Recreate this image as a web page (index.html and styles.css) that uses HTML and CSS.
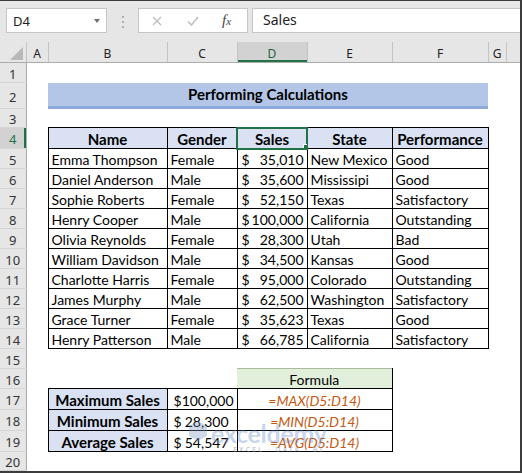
FILE: index.html
```html
<!DOCTYPE html>
<html lang="en">

<head>
    <meta charset="UTF-8">
    <meta name="viewport" content="width=device-width, initial-scale=1.0">
    <title>Performing Calculations</title>
    <link rel="stylesheet" href="styles.css">
</head>

<body>
    <div class="window">
        <div class="formula-bar">
            <div class="name-box">D4<span class="arrow"></span></div>
            <div class="grip"><i></i><i></i><i></i></div>
            <div class="fx-box">
                <svg width="10" height="10" viewBox="0 0 10 10"><path d="M1 1L9 9M9 1L1 9" stroke="#bdbdbd" stroke-width="1.3" fill="none"/></svg>
                <svg width="12" height="10" viewBox="0 0 12 10"><path d="M1 5.5L4.5 9L11 1" stroke="#bdbdbd" stroke-width="1.5" fill="none"/></svg>
                <span class="fx">f<span>x</span></span>
            </div>
            <div class="formula-input">Sales</div>
        </div>

        <table class="sheet">
            <colgroup>
                <col style="width:26px">
                <col style="width:22px">
                <col style="width:119px">
                <col style="width:70px">
                <col style="width:70px">
                <col style="width:85px">
                <col style="width:96px">
                <col style="width:18px">
                <col style="width:14px">
            </colgroup>
            <tr class="col-head">
                <th class="corner"><svg width="13" height="13" viewBox="0 0 13 13"><polygon points="13,0 13,13 0,13" fill="#b8b8b8"/></svg></th>
                <th>A</th>
                <th>B</th>
                <th>C</th>
                <th class="sel">D</th>
                <th>E</th>
                <th>F</th>
                <th>G</th>
                <th class="rest"></th>
            </tr>
            <tr>
                <th class="rh">1</th>
                <td colspan="8"></td>
            </tr>
            <tr class="tall">
                <th class="rh">2</th>
                <td></td>
                <td colspan="5" class="title">Performing Calculations</td>
                <td colspan="2"></td>
            </tr>
            <tr class="short">
                <th class="rh">3</th>
                <td colspan="8"></td>
            </tr>
            <tr class="mid">
                <th class="rh sel">4</th>
                <td></td>
                <td class="b hd">Name</td>
                <td class="b hd">Gender</td>
                <td class="b hd active">Sales</td>
                <td class="b hd">State</td>
                <td class="b hd">Performance</td>
                <td colspan="2"></td>
            </tr>
            <tr>
                <th class="rh">5</th>
                <td></td>
                <td class="b">Emma Thompson</td>
                <td class="b">Female</td>
                <td class="b num"><span class="cur">$</span>35,010</td>
                <td class="b">New Mexico</td>
                <td class="b">Good</td>
                <td colspan="2"></td>
            </tr>
            <tr>
                <th class="rh">6</th>
                <td></td>
                <td class="b">Daniel Anderson</td>
                <td class="b">Male</td>
                <td class="b num"><span class="cur">$</span>35,600</td>
                <td class="b">Mississipi</td>
                <td class="b">Good</td>
                <td colspan="2"></td>
            </tr>
            <tr>
                <th class="rh">7</th>
                <td></td>
                <td class="b">Sophie Roberts</td>
                <td class="b">Female</td>
                <td class="b num"><span class="cur">$</span>52,150</td>
                <td class="b">Texas</td>
                <td class="b">Satisfactory</td>
                <td colspan="2"></td>
            </tr>
            <tr>
                <th class="rh">8</th>
                <td></td>
                <td class="b">Henry Cooper</td>
                <td class="b">Male</td>
                <td class="b num"><span class="cur">$</span>100,000</td>
                <td class="b">California</td>
                <td class="b">Outstanding</td>
                <td colspan="2"></td>
            </tr>
            <tr>
                <th class="rh">9</th>
                <td></td>
                <td class="b">Olivia Reynolds</td>
                <td class="b">Female</td>
                <td class="b num"><span class="cur">$</span>28,300</td>
                <td class="b">Utah</td>
                <td class="b">Bad</td>
                <td colspan="2"></td>
            </tr>
            <tr>
                <th class="rh">10</th>
                <td></td>
                <td class="b">William Davidson</td>
                <td class="b">Male</td>
                <td class="b num"><span class="cur">$</span>34,500</td>
                <td class="b">Kansas</td>
                <td class="b">Good</td>
                <td colspan="2"></td>
            </tr>
            <tr>
                <th class="rh">11</th>
                <td></td>
                <td class="b">Charlotte Harris</td>
                <td class="b">Female</td>
                <td class="b num"><span class="cur">$</span>95,000</td>
                <td class="b">Colorado</td>
                <td class="b">Outstanding</td>
                <td colspan="2"></td>
            </tr>
            <tr>
                <th class="rh">12</th>
                <td></td>
                <td class="b">James Murphy</td>
                <td class="b">Male</td>
                <td class="b num"><span class="cur">$</span>62,500</td>
                <td class="b">Washington</td>
                <td class="b">Satisfactory</td>
                <td colspan="2"></td>
            </tr>
            <tr>
                <th class="rh">13</th>
                <td></td>
                <td class="b">Grace Turner</td>
                <td class="b">Female</td>
                <td class="b num"><span class="cur">$</span>35,623</td>
                <td class="b">Texas</td>
                <td class="b">Good</td>
                <td colspan="2"></td>
            </tr>
            <tr>
                <th class="rh">14</th>
                <td></td>
                <td class="b">Henry Patterson</td>
                <td class="b">Male</td>
                <td class="b num"><span class="cur">$</span>66,785</td>
                <td class="b">California</td>
                <td class="b">Satisfactory</td>
                <td colspan="2"></td>
            </tr>
            <tr>
                <th class="rh">15</th>
                <td colspan="8"></td>
            </tr>
            <tr>
                <th class="rh">16</th>
                <td colspan="3"></td>
                <td colspan="2" class="fhead">Formula</td>
                <td colspan="3"></td>
            </tr>
            <tr class="mid">
                <th class="rh">17</th>
                <td></td>
                <td class="b hd">Maximum Sales</td>
                <td class="b num wide"><span class="cur">$</span>100,000</td>
                <td colspan="2" class="b fml">=MAX(D5:D14)</td>
                <td colspan="3"></td>
            </tr>
            <tr class="mid">
                <th class="rh">18</th>
                <td></td>
                <td class="b hd">Minimum Sales</td>
                <td class="b num wide"><span class="cur">$</span>28,300</td>
                <td colspan="2" class="b fml">=MIN(D5:D14)</td>
                <td colspan="3"></td>
            </tr>
            <tr class="mid">
                <th class="rh">19</th>
                <td></td>
                <td class="b hd">Average Sales</td>
                <td class="b num wide"><span class="cur">$</span>54,547</td>
                <td colspan="2" class="b fml">=AVG(D5:D14)</td>
                <td colspan="3"></td>
            </tr>
            <tr class="short">
                <th class="rh">20</th>
                <td colspan="8"></td>
            </tr>
        </table>

        <!-- faint site watermark over the lower table -->
        <div class="watermark">
            <svg width="20" height="20" viewBox="0 0 20 20"><polygon points="10,0 19,5 19,15 10,20 1,15 1,5" fill="rgba(120,145,185,0.35)"/></svg>
            <div>
                <div class="wm-name">exceldemy</div>
                <div class="wm-sub">EXCEL · DATA · BI</div>
            </div>
        </div>
    </div>
</body>

</html>
```

FILE: styles.css
```css
* {
    box-sizing: border-box;
    margin: 0;
    padding: 0;
}

body {
    background: #fff;
}

.window {
    position: relative;
    width: 522px;
    height: 473px;
    overflow: hidden;
    background: #e6e6e6;
    border-top: 1px solid #3c3c3c;
    border-right: 2px solid #3c3c3c;
    border-bottom: 2px solid #3c3c3c;
    font-family: "Noto Sans", sans-serif;
    color: #222;
}

/* formula bar */

.formula-bar {
    display: flex;
    align-items: flex-start;
    height: 41px;
    padding: 7px 0 0 6px;
}

.name-box {
    display: flex;
    align-items: center;
    justify-content: space-between;
    width: 101px;
    height: 25px;
    padding: 0 6px;
    background: #fff;
    border: 1px solid #c6c6c6;
    font-size: 13px;
}

.arrow {
    border-left: 3px solid transparent;
    border-right: 3px solid transparent;
    border-top: 4px solid #6e6e6e;
}

.grip {
    display: flex;
    flex-direction: column;
    align-items: center;
    gap: 3px;
    width: 31px;
    padding-top: 8px;
}

.grip i {
    width: 2px;
    height: 2px;
    background: #b0b0b0;
}

.fx-box {
    display: flex;
    align-items: center;
    gap: 25px;
    width: 110px;
    height: 25px;
    padding-left: 13px;
    background: #fff;
    border: 1px solid #c6c6c6;
}

.fx {
    margin-left: -2px;
    font: italic 15px "Liberation Serif", serif;
    color: #444;
}

.fx span {
    font-size: 11px;
}

.formula-input {
    flex: 1;
    height: 25px;
    margin-left: 4px;
    padding-left: 10px;
    background: #fff;
    border: 1px solid #c6c6c6;
    border-right: none;
    font-size: 14px;
    line-height: 22px;
}

/* sheet */

.sheet {
    width: 520px;
    table-layout: fixed;
    border-collapse: collapse;
    background: #fff;
    font-family: Lato, sans-serif;
    font-size: 14px;
    color: #000;
}

.sheet tr {
    height: 20px;
}

.sheet tr.tall {
    height: 26px;
}

.sheet tr.mid {
    height: 21px;
}

.sheet tr.short {
    height: 19px;
}

.sheet td {
    padding: 0 3px;
    white-space: nowrap;
    overflow: hidden;
    vertical-align: bottom;
    line-height: 17px;
}

.col-head {
    height: 21px;
}

.col-head th {
    padding-top: 3px;
    background: #e6e6e6;
    border-right: 1px solid #c4c4c4;
    border-bottom: 1px solid #ababab;
    font: 400 12px "Noto Sans", sans-serif;
    color: #222;
}

.col-head th.rest {
    border-right: none;
}

.col-head th.sel {
    background: #d2d2d2;
    color: #1e5e3a;
    box-shadow: inset 0 -2px #217346;
}

.col-head th.corner {
    text-align: right;
    vertical-align: bottom;
    padding: 0 3px 2px 0;
    line-height: 0;
}

.rh {
    padding-top: 2px;
    background: #e6e6e6;
    border-right: 1px solid #ababab;
    border-bottom: 1px solid #d4d4d4;
    font: 400 13px "Noto Sans", sans-serif;
    line-height: 16px;
    color: #333;
    text-align: center;
}

.rh.sel {
    background: #d2d2d2;
    color: #217346;
    box-shadow: inset -2px 0 #217346;
}

.sheet td.title {
    vertical-align: middle;
    padding-bottom: 2px;
    background: #b4c6e7;
    box-shadow: inset 0 -3px #8eaadb;
    font-size: 15px;
    font-weight: 700;
    text-align: center;
}

.b {
    border: 1px solid #000;
}

.hd {
    background: #d9e1f2;
    font-size: 15px;
    font-weight: 700;
    text-align: center;
}

.sheet td.num {
    padding: 0 3px 0 4px;
    text-align: right;
}

.sheet td.num.wide {
    padding: 0 8px 0 6px;
}

.cur {
    float: left;
}

.active {
    position: relative;
    outline: 2px solid #217346;
    outline-offset: -1px;
}

.active::after {
    content: "";
    position: absolute;
    right: -4px;
    bottom: -4px;
    width: 6px;
    height: 6px;
    background: #217346;
    border: 1px solid #fff;
}

.fhead {
    background: #e2efda;
    border-top: 1px solid #a9b99c;
    border-right: 1px solid #000;
    border-bottom: 1px solid #000;
    text-align: center;
}

.fml {
    color: #c65911;
    font-style: italic;
    text-align: center;
}

/* watermark */

.watermark {
    position: absolute;
    left: 188px;
    top: 420px;
    display: flex;
    align-items: flex-start;
    gap: 3px;
    pointer-events: none;
}

.wm-name {
    font: 700 25px Lato, sans-serif;
    line-height: 24px;
    color: rgba(100, 135, 195, 0.36);
    letter-spacing: -0.3px;
}

.wm-sub {
    margin-left: 22px;
    font: 700 7px "Noto Sans", sans-serif;
    letter-spacing: 2px;
    color: rgba(120, 135, 160, 0.42);
}
```
